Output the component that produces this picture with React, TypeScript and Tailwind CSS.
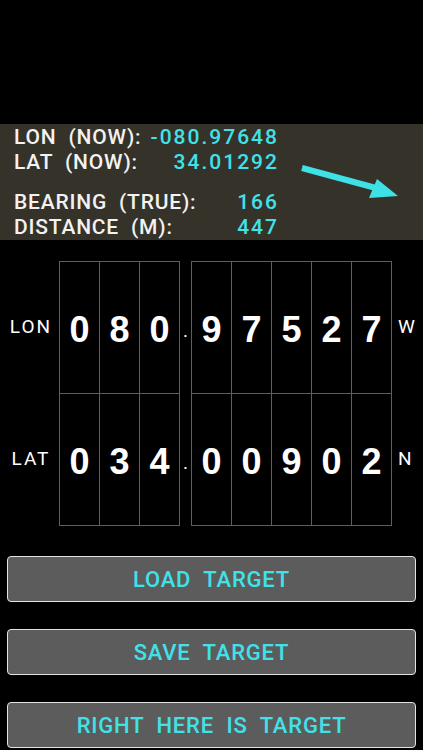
import React from 'react';

const CYAN = 'text-[#40e2e8]';

const infoTop = [
  { label: 'LON  (NOW):', value: '-080.97648' },
  { label: 'LAT  (NOW):', value: '34.01292' },
];

const infoBottom = [
  { label: 'BEARING  (TRUE):', value: '166' },
  { label: 'DISTANCE  (M):', value: '447' },
];

const rows = [
  { label: 'LON', whole: ['0', '8', '0'], frac: ['9', '7', '5', '2', '7'], hemi: 'W' },
  { label: 'LAT', whole: ['0', '3', '4'], frac: ['0', '0', '9', '0', '2'], hemi: 'N' },
];

const InfoLine = ({ label, value }: { label: string; value: string }) => (
  <div className="flex justify-between w-[265px] whitespace-pre h-[25px] leading-[25px]">
    <span className="text-[#f2f2f2] tracking-[0.8px]">{label}</span>
    <span className={`${CYAN} tracking-[2px]`}>{value}</span>
  </div>
);

const DigitCell = ({ d }: { d: string }) => (
  <div
    className="w-[40px] h-[132px] border-r border-b border-[#5f5f52] flex items-center justify-center pt-[5px] text-white font-bold text-[36px] leading-none"
    style={{ fontFamily: '"Liberation Sans", Arial, sans-serif' }}
  >
    {d}
  </div>
);

export default function App() {
  return (
    <div
      className="w-[423px] h-[750px] bg-black overflow-hidden pt-[124px]"
      style={{ fontFamily: 'Roboto, "Open Sans", sans-serif' }}
    >
      {/* readout panel */}
      <div className="relative h-[116px] bg-[#35322a] pl-[14px] pt-[1px] text-[21px] font-medium">
        {infoTop.map((l) => (
          <InfoLine key={l.label} {...l} />
        ))}
        <div className="h-[15px]" />
        {infoBottom.map((l) => (
          <InfoLine key={l.label} {...l} />
        ))}
        <svg className="absolute inset-0 pointer-events-none" width="423" height="116" viewBox="0 0 423 116">
          <line x1="302" y1="44" x2="376" y2="64" stroke="#3ee2e6" strokeWidth="6" />
          <polygon points="377,55 369,74 398,72" fill="#3ee2e6" />
        </svg>
      </div>

      {/* digit wheels */}
      <div className="flex mt-[21px]">
        <div className="w-[59px] flex flex-col">
          {rows.map((r) => (
            <div key={r.label} className="h-[132px] flex items-center justify-center pl-[3px] text-white text-[19px] tracking-[2px]">
              {r.label}
            </div>
          ))}
        </div>
        <div className="border-l border-t border-[#5f5f52] grid grid-cols-3">
          {rows.map((r) => r.whole.map((d, i) => <DigitCell key={r.label + 'w' + i} d={d} />))}
        </div>
        <div className="w-[11px] flex flex-col">
          {rows.map((r) => (
            <div key={r.label} className="h-[132px] flex items-center justify-center pt-[9px] text-white text-[19px]">
              .
            </div>
          ))}
        </div>
        <div className="border-l border-t border-[#5f5f52] grid grid-cols-5">
          {rows.map((r) => r.frac.map((d, i) => <DigitCell key={r.label + 'f' + i} d={d} />))}
        </div>
        <div className="flex flex-col pl-[6px]">
          {rows.map((r) => (
            <div key={r.label} className="h-[132px] flex items-center text-white text-[19px]">
              {r.hemi}
            </div>
          ))}
        </div>
      </div>

      {/* actions */}
      <div className="flex flex-col gap-[27px] px-[7px] mt-[30px]">
        {['LOAD  TARGET', 'SAVE  TARGET', 'RIGHT  HERE  IS  TARGET'].map((t) => (
          <button
            key={t}
            className={`h-[46px] w-full rounded-[4px] border-[1.5px] border-[#e4e4e4] bg-[#5c5c5c] text-[22px] font-medium tracking-[0.8px] whitespace-pre ${CYAN}`}
          >
            {t}
          </button>
        ))}
      </div>
    </div>
  );
}
